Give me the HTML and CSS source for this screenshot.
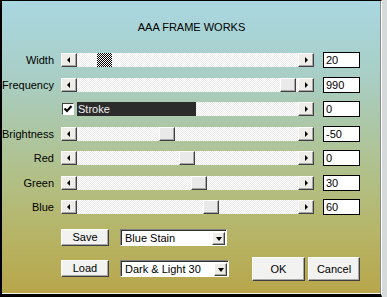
FILE: index.html
```html
<!DOCTYPE html>
<html>
<head>
<meta charset="utf-8">
<title>AAA Frame Works</title>
<link rel="stylesheet" href="styles.css">
</head>
<body>
<div class="screen">
<div class="dlg">
  <div class="title">AAA FRAME WORKS</div>

  <div class="rows">
    <div class="row">
      <span class="lbl">Width</span>
      <div class="sb">
        <span class="btn arr-l"><i></i></span>
        <div class="track"><span class="thumb focus" style="margin-left:20px"></span></div>
        <span class="btn arr-r"><i></i></span>
      </div>
      <div class="val">20</div>
    </div>
    <div class="row">
      <span class="lbl">Frequency</span>
      <div class="sb">
        <span class="btn arr-l"><i></i></span>
        <div class="track"><span class="thumb" style="margin-left:203px"></span></div>
        <span class="btn arr-r"><i></i></span>
      </div>
      <div class="val">990</div>
    </div>
    <div class="row">
      <span class="lbl"></span>
      <div class="sb">
        <span class="chk-cell"><span class="chk"><svg width="10" height="10" viewBox="0 0 10 10"><path d="M1.5 4.5 L4 7 L8.5 2" fill="none" stroke="#000" stroke-width="2.2"/></svg></span></span>
        <span class="stroke">Stroke</span>
        <div class="track"></div>
        <span class="btn arr-r"><i></i></span>
      </div>
      <div class="val">0</div>
    </div>
    <div class="row">
      <span class="lbl">Brightness</span>
      <div class="sb">
        <span class="btn arr-l"><i></i></span>
        <div class="track"><span class="thumb" style="margin-left:82px"></span></div>
        <span class="btn arr-r"><i></i></span>
      </div>
      <div class="val">-50</div>
    </div>
    <div class="row">
      <span class="lbl">Red</span>
      <div class="sb">
        <span class="btn arr-l"><i></i></span>
        <div class="track"><span class="thumb" style="margin-left:102px"></span></div>
        <span class="btn arr-r"><i></i></span>
      </div>
      <div class="val">0</div>
    </div>
    <div class="row">
      <span class="lbl">Green</span>
      <div class="sb">
        <span class="btn arr-l"><i></i></span>
        <div class="track"><span class="thumb" style="margin-left:114px"></span></div>
        <span class="btn arr-r"><i></i></span>
      </div>
      <div class="val">30</div>
    </div>
    <div class="row">
      <span class="lbl">Blue</span>
      <div class="sb">
        <span class="btn arr-l"><i></i></span>
        <div class="track"><span class="thumb" style="margin-left:126px"></span></div>
        <span class="btn arr-r"><i></i></span>
      </div>
      <div class="val">60</div>
    </div>
  </div>

  <div class="foot">
    <div class="presets">
      <span class="pbtn">Save</span>
      <div class="combo c1"><span class="ctext">Blue Stain</span><span class="cbtn"><i></i></span></div>
      <span class="pbtn">Load</span>
      <div class="combo c2"><span class="ctext">Dark &amp; Light 30</span><span class="cbtn"><i></i></span></div>
    </div>
    <div class="actions">
      <span class="pbtn ok">OK</span>
      <span class="pbtn cancel">Cancel</span>
    </div>
  </div>
</div>
</div>
</body>
</html>
```

FILE: styles.css
```css
body{
margin:0;
font-family:"Liberation Sans",Arial,sans-serif;
font-size:11px;
color:#000;
}
.screen{
width:387px;
height:297px;
background:#d6dada;
overflow:hidden;
}
.dlg{
box-sizing:border-box;
width:382px;
height:297px;
border-top:1px solid #000;
border-left:2px solid #000;
border-bottom:3px solid #000;
border-right:1px solid #fff;
box-shadow:inset -1px 0 #8a8a8a, inset 0 -1px #f4f4f4;
background:linear-gradient(#a9d7e1 0%, #a8cec6 25%, #adc6a2 45%, #b2bf84 62%, #b6b466 80%, #b8a64a 100%);
}
.title{
padding-top:19px;
line-height:14px;
text-align:center;
margin-bottom:14px;
}
.row{
display:flex;
align-items:center;
height:24.5px;
}
.lbl{
width:52px;
margin-right:7px;
text-align:right;
white-space:nowrap;
}
.sb{
display:flex;
width:253px;
height:14px;
}
.btn{
box-sizing:border-box;
width:16px;
height:14px;
background:#eeede8;
border:1px solid;
border-color:#fff #404040 #404040 #fff;
box-shadow:inset -1px -1px #a8a8a8;
display:flex;
align-items:center;
justify-content:center;
}
.arr-l i{
border-top:3px solid transparent;
border-bottom:3px solid transparent;
border-right:3px solid #000;
margin-right:2px;
}
.arr-r i{
border-top:3px solid transparent;
border-bottom:3px solid transparent;
border-left:3px solid #000;
margin-left:1px;
}
.track{
flex:1;
display:flex;
background:repeating-conic-gradient(#fff 0 25%, #ebebeb 0 50%) 0 0/2px 2px;
}
.thumb{
box-sizing:border-box;
width:16px;
height:14px;
background:#e9e9e9;
border:1px solid;
border-color:#fff #404040 #404040 #fff;
box-shadow:inset -1px -1px #a8a8a8;
}
.thumb.focus{
width:15px;
border:none;
box-shadow:none;
background:repeating-conic-gradient(#000 0 25%, #fff 0 50%) 0 0/2px 2px;
}
.chk-cell{
width:16px;
display:flex;
align-items:center;
}
.chk{
box-sizing:border-box;
width:12px;
height:12px;
margin-left:1px;
background:#fff;
border:1px solid;
border-color:#404040 #fff #fff #404040;
display:flex;
align-items:center;
justify-content:center;
}
.stroke{
width:118px;
background:#2b2b2b;
color:#f0f0f0;
line-height:14px;
padding-left:1px;
}
.val{
box-sizing:border-box;
width:37px;
height:16px;
margin-left:9px;
background:#fff;
border:1px solid #000;
padding-left:2px;
line-height:14px;
}
.foot{
display:flex;
padding:9.5px 0 0 59px;
}
.presets{
display:grid;
grid-template-columns:48px 109px;
column-gap:11px;
row-gap:10px;
}
.pbtn{
box-sizing:border-box;
height:17px;
background:#f2f2f0;
border:1px solid;
border-color:#fff #404040 #404040 #fff;
box-shadow:inset -1px -1px #a8a8a8;
text-align:center;
line-height:15px;
}
.combo{
box-sizing:border-box;
height:17px;
display:flex;
align-items:center;
background:#fff;
border:1px solid;
border-color:#808080 #fff #fff #808080;
box-shadow:inset 1px 1px #303030;
padding:1px 1px 0 4px;
}
.c1{
width:107px;
}
.ctext{
flex:1;
white-space:nowrap;
}
.cbtn{
box-sizing:border-box;
width:13px;
height:13px;
background:#eeede8;
border:1px solid;
border-color:#fff #404040 #404040 #fff;
box-shadow:inset -1px -1px #a8a8a8;
display:flex;
align-items:center;
justify-content:center;
}
.cbtn i{
border-left:3.5px solid transparent;
border-right:3.5px solid transparent;
border-top:4px solid #000;
margin-top:1px;
}
.actions{
display:flex;
gap:3px;
margin:28px 0 0 23px;
}
.actions .pbtn{
height:24px;
line-height:22px;
}
.ok{
width:53px;
}
.cancel{
width:52px;
}
```
